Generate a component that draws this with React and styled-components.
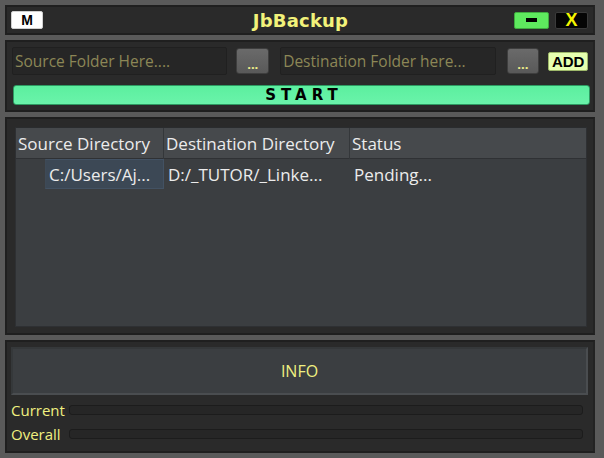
import React from "react";
import styled, { createGlobalStyle } from "styled-components";

const Global = createGlobalStyle`
  html, body { margin: 0; padding: 0; background: #5a5a5a; }
  body { font-family: "Open Sans", "Noto Sans", sans-serif; }
  * { box-sizing: border-box; }
`;

const Shell = styled.div`
  width: 604px;
  height: 458px;
  padding: 5px 5px 0 5px;
  display: flex;
  flex-direction: column;
  gap: 5px;
  background: #5a5a5a;
`;

const Panel = styled.div`
  background: #2a2a2a;
  border: 2px solid #1f1f1f;
  border-right-color: #232323;
  width: 590px;
`;

const TitleBar = styled(Panel)`
  height: 30px;
  display: grid;
  grid-template-columns: 1fr auto 1fr;
  align-items: center;
  padding: 0 5px 0 4px;
`;

const MButton = styled.button`
  justify-self: start;
  width: 32px;
  height: 18px;
  padding: 0;
  border: 1px solid #d0d0d0;
  border-radius: 2px;
  background: #ffffff;
  color: #000;
  font: bold 14px "Liberation Sans", Arial, sans-serif;
  line-height: 16px;
`;

const Title = styled.div`
  font: bold 18px "DejaVu Sans", Verdana, sans-serif;
  color: #f2f27a;
  letter-spacing: 0.2px;
  margin-left: 2px;
`;

const WinButtons = styled.div`
  justify-self: end;
  display: flex;
  gap: 6px;
  align-items: center;
`;

const WinButton = styled.button`
  width: ${(p) => p.$w}px;
  height: 17px;
  padding: 0;
  border-radius: 2px;
  border: 1px solid ${(p) => (p.$green ? "#3faa3f" : "#3a3a3a")};
  background: ${(p) => (p.$green ? "#5ee95e" : "#050505")};
  color: ${(p) => (p.$green ? "#000" : "#f5f500")};
  font: bold 18px "Liberation Sans", Arial, sans-serif;
  line-height: 15px;
  display: flex;
  align-items: center;
  justify-content: center;
`;

const MinusBar = styled.span`
  width: 11px;
  height: 4px;
  background: #000;
`;

const ControlPanel = styled(Panel)`
  height: 72px;
  padding: 5px 5px 0 5px;
  display: flex;
  flex-direction: column;
  gap: 10px;
`;

const InputRow = styled.div`
  display: flex;
  align-items: center;
`;

const PathInput = styled.div`
  width: 217px;
  height: 28px;
  margin-left: ${(p) => p.$ml || 0}px;
  background: #262626;
  border: 1px solid #202020;
  border-radius: 2px;
  color: #8c8756;
  font-size: 15.5px;
  line-height: 26px;
  padding-left: 2px;
  white-space: nowrap;
  overflow: hidden;
`;

const BrowseButton = styled.button`
  width: 33px;
  height: 26px;
  margin-left: ${(p) => p.$ml}px;
  padding: 0;
  border: 1px solid #3e3e3e;
  border-radius: 3px;
  background: linear-gradient(#6a6a6a, #595959);
  color: #f0f08a;
  font: bold 13px "Open Sans", sans-serif;
  line-height: 30px;
`;

const AddButton = styled.button`
  margin-left: 9px;
  width: 40px;
  height: 19px;
  padding: 0;
  border: 1px solid #9eb86a;
  border-radius: 2px;
  background: #e6ffb0;
  color: #000;
  font: bold 15px "Liberation Sans", Arial, sans-serif;
  line-height: 17px;
`;

const StartButton = styled.button`
  width: 577px;
  height: 20px;
  margin-left: 1px;
  padding: 0 0 0 5px;
  border: 1px solid #2e9a62;
  border-radius: 3px;
  background: linear-gradient(#5cef9f, #6af3aa);
  color: #000;
  font: bold 15px "DejaVu Sans", Verdana, sans-serif;
  letter-spacing: 5px;
  line-height: 18px;
`;

const TablePanel = styled(Panel)`
  height: 218px;
  padding: 8px 8px 6px 8px;
`;

const Table = styled.div`
  width: 572px;
  height: 200px;
  background: #3b3e41;
  border: 1px solid #2e3033;
  border-top-color: #2a2c2e;
  font-size: 17px;
  color: #ececec;
`;

const HeadRow = styled.div`
  display: grid;
  grid-template-columns: 148px 186px 1fr;
  height: 31px;
  background: #46494c;
  border-bottom: 1px solid #2f3134;
`;

const HeadCell = styled.div`
  padding-left: 2px;
  line-height: 31px;
  border-right: ${(p) => (p.$last ? "none" : "1px solid #34373a")};
  white-space: nowrap;
`;

const BodyRow = styled.div`
  display: grid;
  grid-template-columns: 148px 186px 1fr;
  height: 31px;
`;

const Cell = styled.div`
  line-height: 31px;
  white-space: nowrap;
  overflow: hidden;
  padding-left: ${(p) => p.$pl ?? 4}px;
`;

const SelectedCell = styled.span`
  display: block;
  margin-left: 29px;
  height: 30px;
  background: #3c4855;
  padding-left: 3px;
  line-height: 30px;
  border: 1px solid #435263;
  border-left-color: #3e4a57;
`;

const InfoPanel = styled(Panel)`
  height: 113px;
  padding: 5px 6px 0 4px;
  display: flex;
  flex-direction: column;
`;

const InfoBox = styled.div`
  width: 577px;
  height: 48px;
  background: #3b3e41;
  border: 2px solid #4a4d50;
  border-top-color: #35383a;
  border-left-color: #35383a;
  color: #f0f080;
  font-size: 16px;
  display: flex;
  align-items: center;
  justify-content: center;
`;

const ProgressRow = styled.div`
  display: flex;
  align-items: center;
  height: 24px;
  margin-top: ${(p) => p.$mt || 0}px;
`;

const ProgressLabel = styled.div`
  width: 58px;
  color: #f0f080;
  font-size: 15px;
  line-height: 20px;
`;

const Track = styled.div`
  width: 514px;
  height: 10px;
  background: #262626;
  border: 1px solid #1c1c1c;
  border-radius: 3px;
`;

export default function App() {
  return (
    <>
      <Global />
      <Shell>
        <TitleBar>
          <MButton>M</MButton>
          <Title>JbBackup</Title>
          <WinButtons>
            <WinButton $green $w={35}>
              <MinusBar />
            </WinButton>
            <WinButton $w={33}>X</WinButton>
          </WinButtons>
        </TitleBar>

        <ControlPanel>
          <InputRow>
            <PathInput>Source Folder Here....</PathInput>
            <BrowseButton $ml={9}>...</BrowseButton>
            <PathInput $ml={11}>Destination Folder here...</PathInput>
            <BrowseButton $ml={11}>...</BrowseButton>
            <AddButton>ADD</AddButton>
          </InputRow>
          <StartButton>START</StartButton>
        </ControlPanel>

        <TablePanel>
          <Table>
            <HeadRow>
              <HeadCell>Source Directory</HeadCell>
              <HeadCell>Destination Directory</HeadCell>
              <HeadCell $last>Status</HeadCell>
            </HeadRow>
            <BodyRow>
              <Cell $pl={0}>
                <SelectedCell>C:/Users/Aj...</SelectedCell>
              </Cell>
              <Cell>D:/_TUTOR/_Linke...</Cell>
              <Cell>Pending...</Cell>
            </BodyRow>
          </Table>
        </TablePanel>

        <InfoPanel>
          <InfoBox>INFO</InfoBox>
          <ProgressRow $mt={3}>
            <ProgressLabel>Current</ProgressLabel>
            <Track />
          </ProgressRow>
          <ProgressRow>
            <ProgressLabel>Overall</ProgressLabel>
            <Track />
          </ProgressRow>
        </InfoPanel>
      </Shell>
    </>
  );
}
